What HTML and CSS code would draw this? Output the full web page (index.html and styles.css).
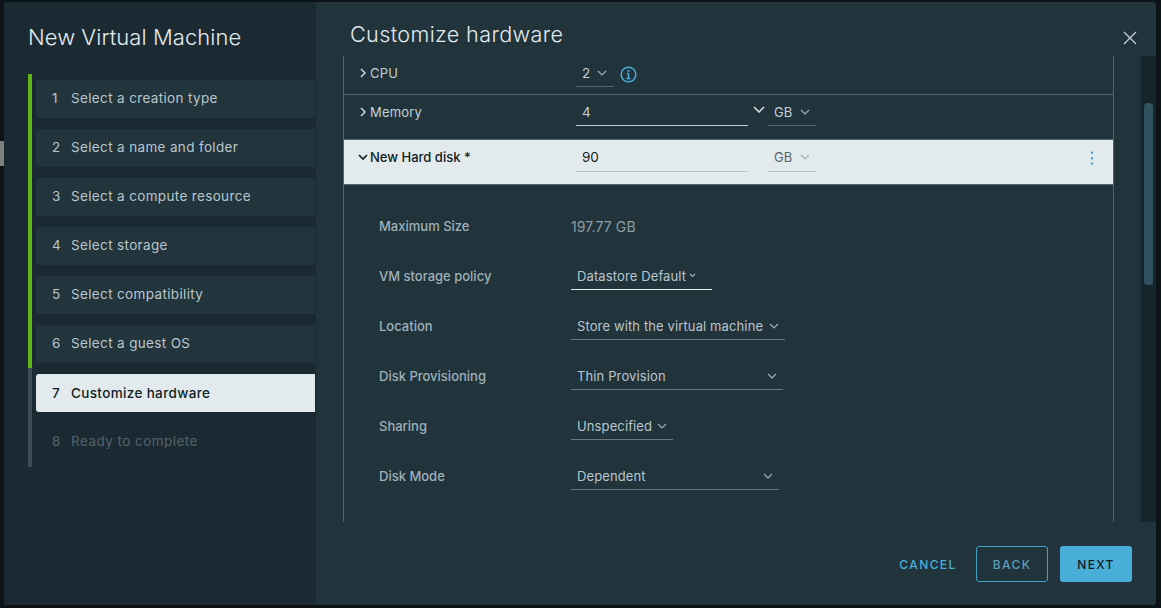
FILE: index.html
```html
<!DOCTYPE html>
<html lang="en">
<head>
  <meta charset="UTF-8" />
  <title>New Virtual Machine</title>
  <link rel="stylesheet" href="styles.css">
</head>
<body>
  <div class="backdrop-mark"></div>
  <div class="modal">
    <aside class="wizard-nav">
      <h2 class="wizard-title">New Virtual Machine</h2>
      <ol class="steps">
        <li class="step done"><span class="step-num">1</span>Select a creation type</li>
        <li class="step done"><span class="step-num">2</span>Select a name and folder</li>
        <li class="step done"><span class="step-num">3</span>Select a compute resource</li>
        <li class="step done"><span class="step-num">4</span>Select storage</li>
        <li class="step done"><span class="step-num">5</span>Select compatibility</li>
        <li class="step done"><span class="step-num">6</span>Select a guest OS</li>
        <li class="step current"><span class="step-num">7</span>Customize hardware</li>
        <li class="step todo"><span class="step-num">8</span>Ready to complete</li>
      </ol>
    </aside>

    <main class="wizard-main">
      <header class="main-head">
        <h3 class="main-title">Customize hardware</h3>
        <svg class="close-icon" width="16" height="16" viewBox="0 0 16 16"><path d="M2 2l12 12M14 2L2 14" /></svg>
      </header>

      <div class="scroll-area">
        <div class="hw-list">
          <div class="hw-row hw-cpu">
            <div class="hw-name">
              <svg class="caret" width="10" height="10" viewBox="0 0 10 10"><path d="M3 1l4 4-4 4" /></svg>CPU
            </div>
            <div class="select-line cpu-select">2<svg class="chev" width="10" height="6" viewBox="0 0 10 6"><path d="M1 1l4 4 4-4" /></svg></div>
            <svg class="info-icon" width="17" height="17" viewBox="0 0 17 17">
              <circle cx="8.5" cy="8.5" r="7.3" />
              <path d="M8.5 7.5v5M6.8 7.5h1.7M6.6 12.6h3.8" />
              <circle class="info-dot" cx="8.5" cy="4.9" r="1.1" />
            </svg>
          </div>
          <div class="hw-row hw-memory">
            <div class="hw-name">
              <svg class="caret" width="10" height="10" viewBox="0 0 10 10"><path d="M3 1l4 4-4 4" /></svg>Memory
            </div>
            <div class="text-input mem-input">4</div>
            <svg class="chev mem-chev" width="12" height="7" viewBox="0 0 12 7"><path d="M1 1l5 5 5-5" /></svg>
            <div class="select-line unit-select">GB<svg class="chev" width="10" height="6" viewBox="0 0 10 6"><path d="M1 1l4 4 4-4" /></svg></div>
          </div>
          <div class="hw-row hw-disk">
            <div class="hw-name">
              <svg class="caret" width="10" height="10" viewBox="0 0 10 10"><path d="M1 3l4 4 4-4" /></svg>New Hard disk *
            </div>
            <div class="text-input disk-input">90</div>
            <div class="select-line unit-select disk-unit">GB<svg class="chev" width="10" height="6" viewBox="0 0 10 6"><path d="M1 1l4 4 4-4" /></svg></div>
            <svg class="dots" width="4" height="14" viewBox="0 0 4 14">
              <circle cx="2" cy="1.8" r="1.2" /><circle cx="2" cy="7.2" r="1.2" /><circle cx="2" cy="12.6" r="1.2" />
            </svg>
          </div>

          <div class="disk-details">
            <div class="detail-row">
              <div class="detail-label">Maximum Size</div>
              <div class="detail-value">197.77 GB</div>
            </div>
            <div class="detail-row">
              <div class="detail-label">VM storage policy</div>
              <div class="detail-select policy-select">Datastore Default<svg class="chev small" width="7" height="5" viewBox="0 0 7 5"><path d="M1 1l2.5 2.5L6 1" /></svg></div>
            </div>
            <div class="detail-row">
              <div class="detail-label">Location</div>
              <div class="detail-select location-select">Store with the virtual machine<svg class="chev" width="10" height="6" viewBox="0 0 10 6"><path d="M1 1l4 4 4-4" /></svg></div>
            </div>
            <div class="detail-row">
              <div class="detail-label">Disk Provisioning</div>
              <div class="detail-select provision-select">Thin Provision<svg class="chev" width="10" height="6" viewBox="0 0 10 6"><path d="M1 1l4 4 4-4" /></svg></div>
            </div>
            <div class="detail-row">
              <div class="detail-label">Sharing</div>
              <div class="detail-select sharing-select">Unspecified<svg class="chev" width="10" height="6" viewBox="0 0 10 6"><path d="M1 1l4 4 4-4" /></svg></div>
            </div>
            <div class="detail-row">
              <div class="detail-label">Disk Mode</div>
              <div class="detail-select mode-select">Dependent<svg class="chev" width="10" height="6" viewBox="0 0 10 6"><path d="M1 1l4 4 4-4" /></svg></div>
            </div>
          </div>
        </div>
        <div class="scrollbar"><div class="scroll-thumb"></div></div>
      </div>

      <footer class="main-foot">
        <button class="btn btn-link">CANCEL</button>
        <button class="btn btn-outline">BACK</button>
        <button class="btn btn-primary">NEXT</button>
      </footer>
    </main>
  </div>
</body>
</html>
```

FILE: styles.css
```css
* {
  box-sizing: border-box;
}

html, body {
  height: 100%;
}

body {
  margin: 0;
  background: #0b1316;
  font-family: Inter, 'Noto Sans', sans-serif;
  font-size: 13.5px;
  overflow: hidden;
  padding: 2px 5px 3px 4px;
}

.backdrop-mark {
  position: absolute;
  left: 0;
  top: 141px;
  width: 4px;
  height: 25px;
  background: #7f7f7f;
}

.modal {
  position: relative;
  display: flex;
  height: 603px;
  border-radius: 3px;
  overflow: hidden;
  background: #21333b;
}

/* left side */
.wizard-nav {
  width: 312px;
  flex: none;
  background: #1b2a32;
  border-right: 1px solid #1a2a31;
  padding: 0 0 0 24px;
}

.wizard-title {
  margin: 22px 0 0;
  height: 50px;
  font-size: 22px;
  line-height: 26px;
  font-weight: 300;
  color: #e3eaee;
  letter-spacing: 0.05px;
}

.steps {
  list-style: none;
  margin: 0;
  padding: 6px 0 6px 4px;
  border-left: 4px solid #60b515;
  display: flex;
  flex-direction: column;
  gap: 11px;
  position: relative;
}

.steps::after {
  content: '';
  position: absolute;
  left: -4px;
  top: 294px;
  bottom: 0;
  width: 4px;
  background: #3d4c54;
}

.step {
  height: 38px;
  display: flex;
  align-items: center;
  color: #b9c6cd;
  border-radius: 3px 0 0 3px;
  letter-spacing: 0.35px;
  padding-bottom: 2px;
}

.step-num {
  width: 35px;
  padding-left: 16px;
  flex: none;
}

.done {
  background: #22343c;
}

.current {
  background: #e3eaee;
  color: #0f1d24;
  font-weight: 500;
  padding-bottom: 0;
}

.todo {
  color: #55626a;
  letter-spacing: 0.45px;
}

/* right side */
.wizard-main {
  flex: 1;
  min-width: 0;
  display: flex;
  flex-direction: column;
}

.main-head {
  height: 54px;
  display: flex;
  justify-content: space-between;
  padding: 18px 18px 0 34px;
}

.main-title {
  margin: 0;
  font-size: 21.6px;
  line-height: 28px;
  font-weight: 300;
  color: #e3eaee;
  letter-spacing: 0.36px;
}

.close-icon {
  margin-top: 10px;
  fill: none;
  stroke: #c5d0d6;
  stroke-width: 1.3;
}

.scroll-area {
  height: 466px;
  display: flex;
  padding-left: 27px;
}

.hw-list {
  width: 771px;
  flex: none;
  border-left: 1px solid #56656d;
  border-right: 1px solid #56656d;
  overflow: hidden;
}

.hw-row {
  display: flex;
  position: relative;
  color: #c5d0d6;
}

.hw-name {
  width: 232px;
  flex: none;
  display: flex;
  align-items: center;
  gap: 2px;
  padding-left: 14px;
  height: 34px;
  font-size: 13px;
  letter-spacing: 0.2px;
}

.caret {
  fill: none;
  stroke: currentColor;
  stroke-width: 1.6;
}

.hw-cpu {
  height: 39px;
  border-bottom: 1px solid #56656d;
}

.hw-memory {
  height: 44px;
}

.hw-disk {
  height: 46px;
  background: #e3eaee;
  color: #0f1d24;
  border-top: 1px solid #56656d;
  border-bottom: 1px solid #56656d;
}

.hw-disk .hw-name {
  font-weight: 500;
  letter-spacing: 0;
}

.select-line,
.text-input {
  display: flex;
  align-items: center;
  padding: 4px 0 0 6px;
  border-bottom: 1px solid #56656d;
}

.cpu-select {
  width: 38px;
  height: 31px;
  margin-bottom: 8px;
  gap: 7px;
}

.chev {
  fill: none;
  stroke: #9fb0b8;
  stroke-width: 1.2;
  flex: none;
}

.info-icon {
  margin: 10px 0 0 6px;
  fill: none;
  stroke: #49afd9;
  stroke-width: 1.5;
}

.info-icon .info-dot {
  fill: #49afd9;
  stroke: none;
}

.mem-input {
  width: 172px;
  height: 31px;
  border-bottom-color: #c5d0d6;
}

.mem-chev {
  margin: 11px 0 0 5px;
  stroke: #dbe3e7;
  stroke-width: 1.5;
}

.unit-select {
  width: 48px;
  height: 31px;
  margin-left: 3px;
  gap: 8px;
  font-size: 13px;
}

.hw-disk .text-input,
.hw-disk .select-line {
  border-bottom-color: #b8c2c8;
  height: 32px;
  padding-top: 3px;
}

.disk-input {
  width: 172px;
}

.disk-unit {
  margin-left: 20px;
  color: #55636b;
}

.dots {
  position: absolute;
  right: 19px;
  top: 11px;
  fill: #49a3c7;
}

.disk-details {
  padding: 17px 0 0 35px;
}

.detail-row {
  display: flex;
  align-items: center;
  height: 50px;
  color: #b9c6cd;
}

.detail-label {
  width: 192px;
  flex: none;
  margin-bottom: 2px;
  font-size: 13px;
  font-weight: 500;
  color: #9fb0b8;
}

.detail-value {
  margin-bottom: 2px;
  font-size: 14px;
  letter-spacing: 0.1px;
  color: #8f9ea6;
}

.detail-select {
  display: flex;
  align-items: center;
  justify-content: space-between;
  height: 25px;
  padding: 0 6px 2px;
  font-size: 13px;
  letter-spacing: 0.12px;
  border-bottom: 1px solid #6b7880;
}

.policy-select {
  width: 141px;
  justify-content: flex-start;
  gap: 3px;
  border-bottom-color: #e3eaee;
}

.location-select {
  width: 214px;
}

.provision-select {
  width: 212px;
}

.sharing-select {
  width: 102px;
}

.mode-select {
  width: 208px;
}

.scrollbar {
  width: 15px;
  margin-left: 27px;
  flex: none;
  background: #16252b;
  padding: 47px 3px 0;
}

.scroll-thumb {
  height: 182px;
  background: #31525f;
  border-radius: 4px;
}

.main-foot {
  flex: 1;
  display: flex;
  align-items: flex-start;
  justify-content: flex-end;
  padding: 24px 24px 0 0;
  gap: 12px;
}

.btn {
  height: 36px;
  width: 72px;
  font-family: Inter, 'Noto Sans', sans-serif;
  font-size: 12px;
  font-weight: 500;
  letter-spacing: 1.4px;
  border-radius: 3px;
  border: 1px solid transparent;
  background: none;
  padding: 0;
}

.btn-link {
  color: #49afd9;
}

.btn-outline {
  color: #5d9dba;
  border-color: #49a3c7;
}

.btn-primary {
  background: #49afd9;
  color: #0f1d24;
}
```
